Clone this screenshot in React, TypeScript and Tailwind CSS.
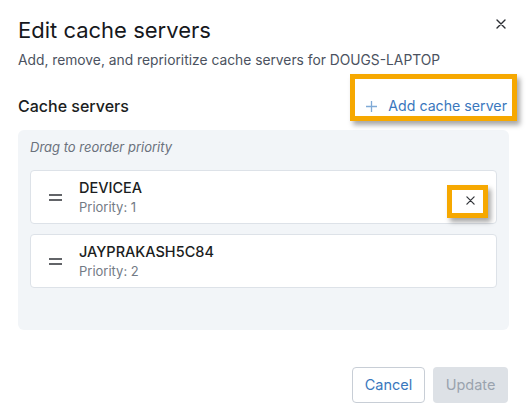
import React from 'react';

const servers = [
  { name: 'DEVICEA', priority: 1, highlighted: true },
  { name: 'JAYPRAKASH5C84', priority: 2, highlighted: false },
];

function CloseIcon({ className = '' }: { className?: string }) {
  return (
    <svg viewBox="0 0 10 10" className={className} fill="none" stroke="currentColor" strokeWidth={1.4} strokeLinecap="round">
      <path d="M1 1L9 9M9 1L1 9" />
    </svg>
  );
}

function Highlight({ className }: { className: string }) {
  return (
    <span
      className={`pointer-events-none absolute border-[5px] border-[#f6a800] shadow-[3px_4px_5px_rgba(0,0,0,0.35)] ${className}`}
    />
  );
}

export default function App() {
  return (
    <div className="h-[417px] w-[527px] bg-white font-['Inter','Noto_Sans',sans-serif] text-[#1b1d21]">
      <div className="flex items-start justify-between pl-[18px] pr-[21px] pt-[16px]">
        <h1 className="text-[22px] leading-[28px] font-normal text-[#16181c]">Edit cache servers</h1>
        <button className="mt-[3px] flex h-[10px] w-[10px] items-center justify-center text-[#2b2e33]">
          <CloseIcon className="h-[10px] w-[10px]" />
        </button>
      </div>
      <p className="mt-[6px] pl-[18px] text-[13.8px] leading-[20px] text-[#4b5260]">
        Add, remove, and reprioritize cache servers for DOUGS-LAPTOP
      </p>

      <div className="mx-[18px] mt-[20px] flex items-center justify-between">
        <h2 className="text-[16px] leading-[24px] font-medium text-[#1b1d21]">Cache servers</h2>
        <button className="relative flex h-[32px] items-center gap-[11px] pl-[8px] pr-[2px] text-[14.2px] text-[#3a77bd]">
          <Highlight className="-left-[8px] -right-[8px] -top-[16px] bottom-[1px]" />
          <svg viewBox="0 0 11 11" className="h-[11px] w-[11px] text-[#7faad6]" fill="none" stroke="currentColor" strokeWidth={1.3}>
            <path d="M5.5 0V11M0 5.5H11" />
          </svg>
          Add cache server
        </button>
      </div>

      <div className="mx-[18px] mt-[8px] rounded-[6px] bg-[#f2f5f8] px-[12px] pb-[42px] pt-[8px]">
        <p className="text-[13px] leading-[18px] italic text-[#6a717c]">Drag to reorder priority</p>
        <div className="mt-[14px] flex flex-col gap-[10px]">
          {servers.map((s) => (
            <div
              key={s.name}
              className="flex items-center rounded-[4px] border border-[#dde2e8] bg-white py-[7px] pl-[18px] pr-[10px]"
            >
              <svg viewBox="0 0 13 7" className="h-[7px] w-[13px] text-[#2f3237]" fill="none" stroke="currentColor" strokeWidth={1.5}>
                <path d="M0 1H13M0 6H13" />
              </svg>
              <div className="ml-[17px] flex-1">
                <div className="text-[14.5px] leading-[20px] font-medium text-[#1b1d21]">{s.name}</div>
                <div className="text-[13px] leading-[18px] text-[#737a85]">Priority: {s.priority}</div>
              </div>
              {s.highlighted && (
                <button className="relative mt-[6px] flex h-[32px] w-[32px] items-center justify-center text-[#33363b]">
                  <Highlight className="-left-[7px] -right-[2px] top-[1px] -bottom-[2px]" />
                  <CloseIcon className="h-[9px] w-[9px]" />
                </button>
              )}
            </div>
          ))}
        </div>
      </div>

      <div className="mr-[19px] mt-[37px] flex justify-end gap-[8px]">
        <button className="h-[36px] w-[73px] rounded-[4px] border border-[#c8ced6] bg-white text-[14.5px] text-[#3a77bd]">
          Cancel
        </button>
        <button className="h-[36px] w-[75px] rounded-[4px] bg-[#dde1e6] text-[14.5px] text-[#9aa3ae]">Update</button>
      </div>
    </div>
  );
}
